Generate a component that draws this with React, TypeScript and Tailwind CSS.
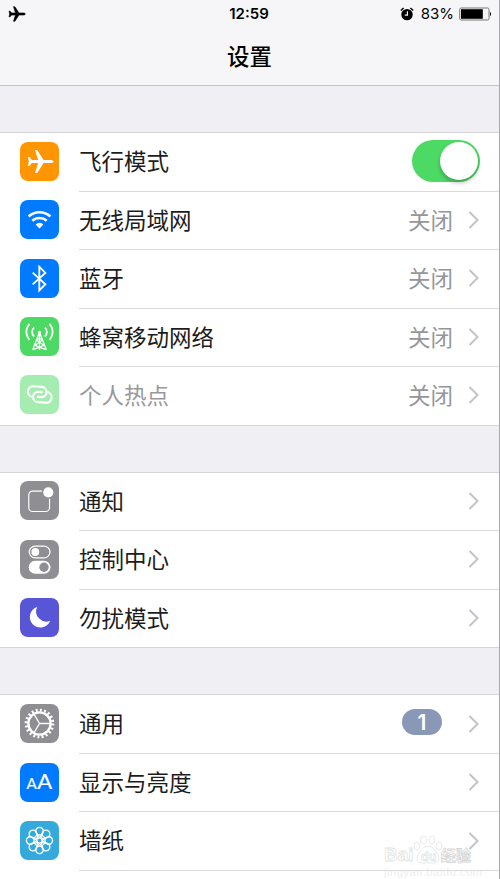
import type { ReactNode } from 'react';

interface Item {
  label: string;
  icon: ReactNode;
  color: string;
  value?: string;
  badge?: number;
  toggle?: boolean;
  disabled?: boolean;
}

const PLANE =
  'M34.4 20c0-1-1.4-1.6-3-1.6h-7.2L17.6 8.200h-2.300l3.300 10.200h-6.400l-2.500-3H8l1.100 4.600L8 24.600h1.700l2.500-3h6.400l-3.300 10.200h2.300l6.600-10.200h7.200c1.600 0 3-.6 3-1.600z';

function PlaneIcon() {
  return <path d={PLANE} fill="#fff" />;
}

function WifiIcon() {
  return (
    <g fill="none" stroke="#fff" strokeWidth="2.700">
      <path d="M8.800 16.900a16.500 16.500 0 0 1 22.400 0" />
      <path d="M12.600 21.300a11 11 0 0 1 14.800 0" />
      <path d="M20 29.300l-4-4.300a5.600 5.600 0 0 1 8 0z" fill="#fff" stroke="none" />
    </g>
  );
}

function BluetoothIcon() {
  return <path d="M13 14l13 11.900-6.200 6.300V8l6.200 6.200L13 26" fill="none" stroke="#fff" strokeWidth="1.900" />;
}

function CellularIcon() {
  return (
    <g fill="none" stroke="#fff" strokeWidth="1.300">
      <path d="M14.500 10.700a6.500 6.500 0 0 0 0 9.500M25.500 10.700a6.500 6.500 0 0 1 0 9.500M9.800 7a12 12 0 0 0 0 16.500M30.200 7a12 12 0 0 1 0 16.500" strokeWidth="1.800" />
      <path d="M20 15.500L13 33.500M20 15.500l7 18M20 15v18.500M17.500 22.500h5M17 23.500l7.500 5.500-11 4.500M23 23.500L15.500 29l11 4.500" />
      <circle cx="20" cy="15.800" r="1.500" fill="#fff" stroke="none" />
    </g>
  );
}

function HotspotIcon() {
  return (
    <g fill="none" stroke="#fff" strokeWidth="2.200" strokeLinecap="round" transform="rotate(4 20.300 20)">
      <path d="M12 22.800a5.500 5.500 0 0 1 1.700-10.800h8a5.300 5.300 0 0 1 0 10.600h-3.200" />
      <path d="M28.600 17.200a5.500 5.500 0 0 1-1.700 10.800h-8a5.300 5.300 0 0 1 0-10.600h3.200" />
    </g>
  );
}

function NotificationIcon() {
  return (
    <g fill="none" stroke="#fff" strokeWidth="1.200">
      <path d="M22.500 10.300H13a4 4 0 0 0-4 4v13a4 4 0 0 0 4 4h13.300a4 4 0 0 0 4-4v-9" />
      <circle cx="29" cy="11.700" r="5.200" fill="#fff" stroke="none" />
    </g>
  );
}

function ControlIcon() {
  return (
    <g>
      <rect x="9.500" y="6.300" width="21.200" height="12" rx="6" fill="none" stroke="#fff" strokeWidth="1.300" />
      <circle cx="15.700" cy="12.300" r="4" fill="#fff" />
      <rect x="8.900" y="21.300" width="22.400" height="13.200" rx="6.600" fill="#fff" />
      <circle cx="24.600" cy="27.900" r="4.800" fill="#8e8e93" />
    </g>
  );
}

function MoonIcon() {
  return <path d="M17.600 9.200A10.800 10.800 0 1 0 31 23.300 10.400 10.400 0 0 1 17.600 9.200z" fill="#fff" />;
}

function GearIcon() {
  return (
    <g fill="none" stroke="#fff">
      <circle cx="20" cy="20" r="11.400" strokeWidth="2.400" />
      <circle cx="20" cy="20" r="13.700" strokeWidth="3" strokeDasharray="2 2.303" />
      <path d="M20 20h11M20 20l-5.500-9.500M20 20l-5.500 9.500" strokeWidth="1.400" />
    </g>
  );
}

function DisplayIcon() {
  return (
    <g fill="#fff" stroke="#fff" strokeWidth=".2" fontFamily="Lato, sans-serif">
      <text x="6.600" y="27" fontSize="15.500">A</text>
      <text x="17.700" y="27" fontSize="22.500">A</text>
    </g>
  );
}

function WallpaperIcon() {
  const angles = [0, 45, 90, 135, 180, 225, 270, 315];
  return (
    <g fill="none" stroke="#fff" strokeWidth="1.400">
      {angles.map((a) => (
        <g key={a} transform={`rotate(${a} 20 20)`}>
          <circle cx="20" cy="10.500" r="3.900" />
          <path d="M20 17.300l-2.900-4.300M20 17.300l2.900-4.300" strokeWidth="1.100" />
        </g>
      ))}
      <circle cx="20" cy="20" r="2.700" />
    </g>
  );
}

const groups: Item[][] = [
  [
    { label: '飞行模式', icon: <PlaneIcon />, color: 'bg-[#ff9500]', toggle: true },
    { label: '无线局域网', icon: <WifiIcon />, color: 'bg-[#007aff]', value: '关闭' },
    { label: '蓝牙', icon: <BluetoothIcon />, color: 'bg-[#007aff]', value: '关闭' },
    { label: '蜂窝移动网络', icon: <CellularIcon />, color: 'bg-[#4cd964]', value: '关闭' },
    { label: '个人热点', icon: <HotspotIcon />, color: 'bg-[#a5ecb1]', value: '关闭', disabled: true },
  ],
  [
    { label: '通知', icon: <NotificationIcon />, color: 'bg-[#8e8e93]' },
    { label: '控制中心', icon: <ControlIcon />, color: 'bg-[#8e8e93]' },
    { label: '勿扰模式', icon: <MoonIcon />, color: 'bg-[#5856d6]' },
  ],
  [
    { label: '通用', icon: <GearIcon />, color: 'bg-[#8e8e93]', badge: 1 },
    { label: '显示与亮度', icon: <DisplayIcon />, color: 'bg-[#007aff]' },
    { label: '墙纸', icon: <WallpaperIcon />, color: 'bg-[#34aadc]' },
  ],
];

function Chevron() {
  return (
    <svg viewBox="0 0 12 20" className="h-5 w-3 shrink-0">
      <path d="M1.500 2l8 8-8 8" fill="none" stroke="#c3c3c8" strokeWidth="2" />
    </svg>
  );
}

function Row({ item, last }: { item: Item; last: boolean }) {
  return (
    <div className={`flex h-[58.5px] pl-5 ${last ? 'border-b border-[#d5d5d9]' : ''}`}>
      <div className="flex w-[59px] shrink-0 items-center">
        <div className={`mb-[2px] h-[39px] w-[39px] overflow-hidden rounded-[8px] ${item.color}`}>
          <svg viewBox="0 0 40 40" className="h-full w-full">{item.icon}</svg>
        </div>
      </div>
      <div className={`flex flex-1 items-center pr-[19px] pb-px ${last ? '' : 'border-b border-[#d9d9dc]'}`}>
        <span className={`flex-1 pt-1 text-[22.5px] leading-none ${item.disabled ? 'text-[#98989c]' : 'text-[#1c1c1c]'}`}>
          {item.label}
        </span>
        {item.toggle && (
          <div className="mb-px flex h-[42px] w-[68px] items-center justify-end rounded-full bg-[#4cd964] pr-0.5">
            <div className="h-[38px] w-[38px] rounded-full bg-white shadow-[0_3px_4px_rgba(0,0,0,0.25)]" />
          </div>
        )}
        {item.badge && (
          <span className="mr-[26px] mb-[3px] flex h-[26px] w-10 items-center justify-center rounded-full bg-[#8998b6] font-['Inter'] text-[21px] leading-none font-semibold text-white">
            {item.badge}
          </span>
        )}
        {item.value && <span className="mr-[15px] pt-1 text-[22.5px] leading-none text-[#96969a]">{item.value}</span>}
        {!item.toggle && <Chevron />}
      </div>
    </div>
  );
}

function StatusBar() {
  return (
    <div className="grid h-7 grid-cols-3 items-center pr-[7px] pl-2 font-['Inter'] text-[15px] text-black">
      <svg viewBox="7 7 28 26" className="h-4 w-[18px]">
        <path d={PLANE} stroke="#000" />
      </svg>
      <span className="pr-0.5 text-center font-semibold">12:59</span>
      <div className="flex items-center justify-end">
        <svg viewBox="0 0 14 14" className="mr-[7px] h-3.5 w-3.5">
          <circle cx="7" cy="7.600" r="5.700" />
          <path d="M.8 3.600L3.600 1M13.200 3.600L10.400 1" stroke="#000" strokeWidth="1.400" />
          <path d="M7.400 4.300v3.900H4.800" fill="none" stroke="#f6f6f8" strokeWidth="1.200" />
        </svg>
        <span>83%</span>
        <svg viewBox="0 0 33 14" className="ml-[5px] h-3.5 w-[33px]">
          <rect x=".7" y="1" width="29.300" height="12" rx="1.500" fill="none" stroke="#777" />
          <rect x="2" y="2.200" width="21.800" height="9.600" fill="#000" />
          <path d="M31 5c1.300.3 1.300 3.700 0 4z" />
        </svg>
      </div>
    </div>
  );
}

function Watermark() {
  return (
    <div className="absolute top-[835px] left-[383px] h-11 w-28 opacity-60">
      <svg viewBox="0 0 112 44" className="h-full w-full" fontFamily="'Liberation Sans', 'Noto Sans CJK SC', sans-serif">
        <g fill="#fff" stroke="#d2d2d2" strokeWidth=".8">
          <text x="1" y="26" fontSize="19" fontWeight="bold">Bai</text>
          <ellipse cx="34" cy="11" rx="3" ry="4" />
          <ellipse cx="40.500" cy="5" rx="3" ry="4" />
          <ellipse cx="49" cy="5" rx="3" ry="4" />
          <ellipse cx="56" cy="11" rx="3" ry="4" />
          <path d="M45 11c5 0 6 4 9 7s3 10-3 10H39c-6 0-6-7-3-10s4-7 9-7z" />
          <text x="38" y="25.500" fontSize="12.500" fontWeight="bold">du</text>
          <text x="58" y="25.500" fontSize="15" fontWeight="bold" stroke="#bcbcbc">经验</text>
        </g>
        <text x="1" y="41" fontSize="11" fill="#e2e2e4" textLength="98">jingyan.baidu.com</text>
      </svg>
    </div>
  );
}

export default function App() {
  return (
    <div className="relative h-[879px] w-[500px] overflow-hidden border-r border-[#a8a8ac] bg-[#efeff4] font-['Liberation_Sans','Noto_Sans_CJK_SC',sans-serif]">
      <header className="h-[86px] border-b border-[#c3c3c7] bg-[#f6f6f8]">
        <StatusBar />
        <h1 className="pt-[19px] text-center text-[22.4px] leading-none font-medium text-black">设置</h1>
      </header>
      <main className="flex flex-col gap-[46.2px] pt-[46px]">
        {groups.map((items, i) => (
          <section key={i} className="border-t border-[#d5d5d9] bg-white">
            {items.map((item, j) => (
              <Row key={item.label} item={item} last={i < 2 && j === items.length - 1} />
            ))}
            {i === 2 && <div className="h-5" />}
          </section>
        ))}
      </main>
      <Watermark />
    </div>
  );
}
